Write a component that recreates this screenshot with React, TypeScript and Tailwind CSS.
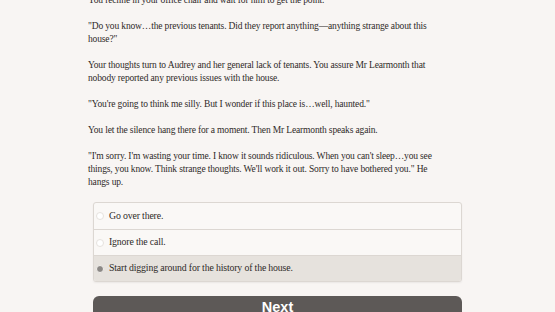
import { useState } from "react";

const serif = {
  fontFamily: '"Palatino Linotype", "Book Antiqua", "Liberation Serif", serif',
  letterSpacing: "-0.15px",
};

const paragraphs: React.ReactNode[] = [
  <>You recline in your office chair and wait for him to get the point.</>,
  <>
    "Do you know…the previous tenants. Did they report anything—anything strange about this
    <br />
    house?"
  </>,
  <>
    Your thoughts turn to Audrey and her general lack of tenants. You assure Mr Learmonth that
    <br />
    nobody reported any previous issues with the house.
  </>,
  <>"You're going to think me silly. But I wonder if this place is…well, haunted."</>,
  <>You let the silence hang there for a moment. Then Mr Learmonth speaks again.</>,
  <>
    "I'm sorry. I'm wasting your time. I know it sounds ridiculous. When you can't sleep…you see
    <br />
    things, you know. Think strange thoughts. We'll work it out. Sorry to have bothered you." He
    <br />
    hangs up.
  </>,
];

const choices = [
  "Go over there.",
  "Ignore the call.",
  "Start digging around for the history of the house.",
];

export default function App() {
  const [picked, setPicked] = useState(2);

  return (
    <div className="h-[312px] w-full overflow-hidden bg-[#f8f5f3]">
      <div className="mx-auto mt-[-6px] w-[369px]">
        {/* story text */}
        <div className="-ml-[5px] text-[9.5px] leading-[13px] text-[#2e2a28]" style={serif}>
          {paragraphs.map((p, i) => (
            <p key={i} className="mb-[13px] whitespace-nowrap">
              {p}
            </p>
          ))}
        </div>

        {/* choices */}
        <div className="overflow-hidden rounded-[3px] border border-[#dcd7d2] bg-[#faf8f6] shadow-[0_1px_2px_rgba(0,0,0,0.06)]">
          {choices.map((c, i) => {
            const active = i === picked;
            return (
              <button
                key={c}
                type="button"
                onClick={() => setPicked(i)}
                className={[
                  "flex h-[26px] w-full items-center gap-[5px] px-[2px] text-left text-[9.8px] text-[#2e2a28]",
                  i > 0 ? "border-t border-[#dcd7d2]" : "",
                  active ? "bg-[#e6e2dd]" : "",
                ].join(" ")}
                style={serif}
              >
                <span
                  className={[
                    "h-[8px] w-[8px] shrink-0 rounded-full border",
                    active ? "border-[#f4f1ee] bg-[#8c8986]" : "border-[#e6e2de] bg-white",
                  ].join(" ")}
                />
                {c}
              </button>
            );
          })}
        </div>

        {/* next */}
        <button
          type="button"
          className="mt-[14px] flex h-[30px] w-full items-start justify-center rounded-[6px] bg-[#5d5957] pt-[1px] text-[14.5px] font-bold text-white"
          style={{ fontFamily: '"Liberation Sans", Arial, sans-serif' }}
        >
          Next
        </button>
      </div>
    </div>
  );
}
